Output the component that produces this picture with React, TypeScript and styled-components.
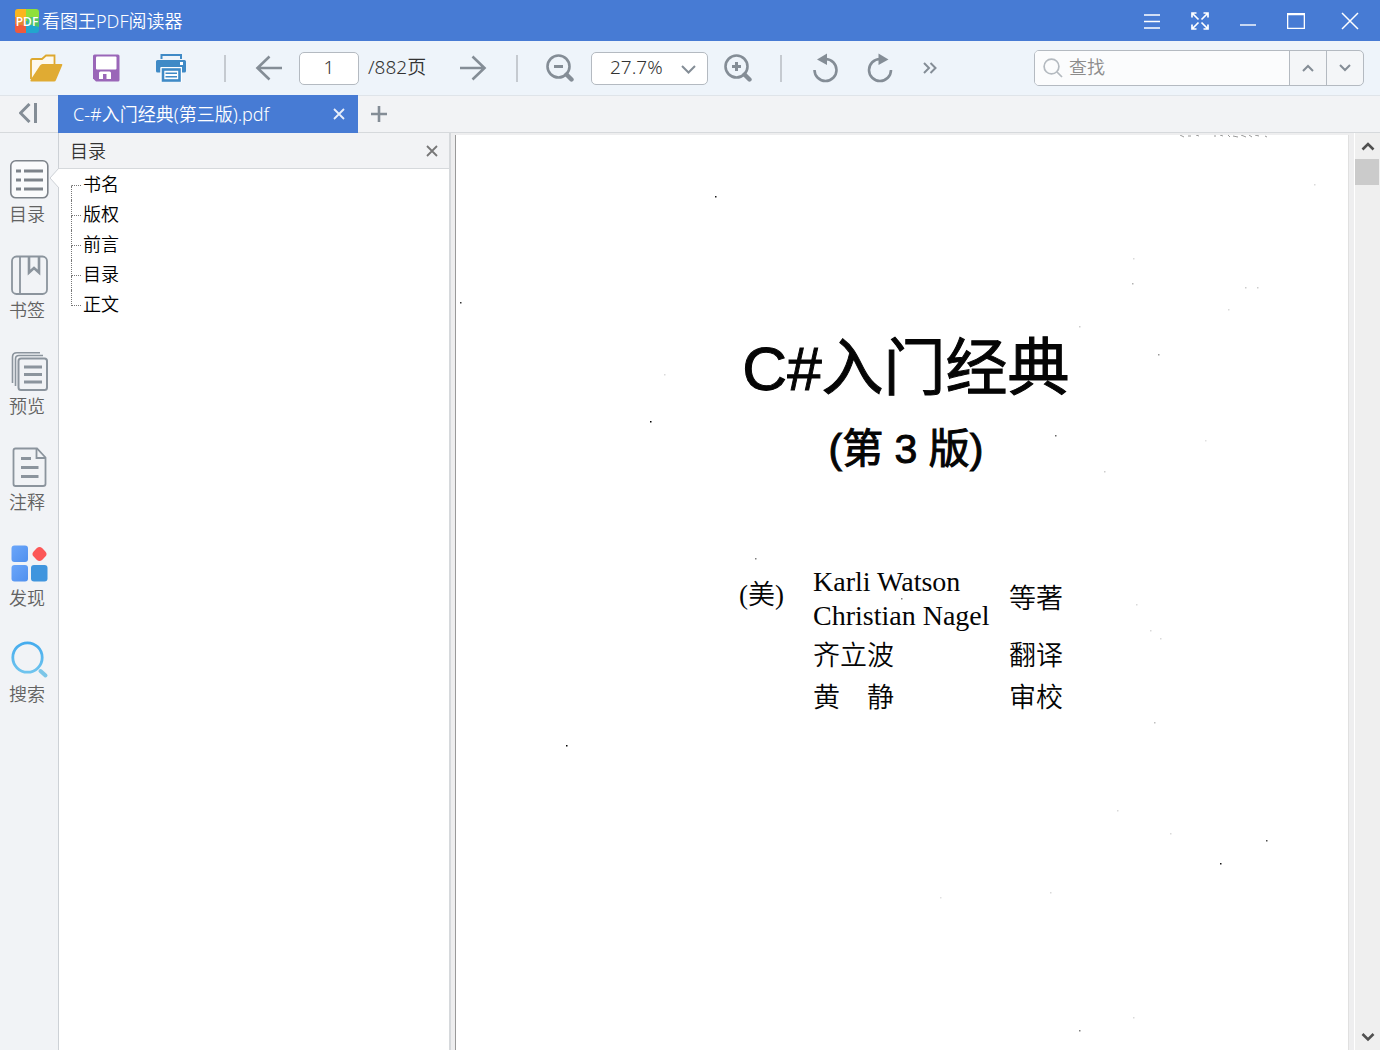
import React, { useState } from "react";
import styled, { createGlobalStyle } from "styled-components";

const color = {
  brand: "#477bd4",
  toolbar: "#eef4fa",
  chrome: "#f2f3f5",
  rail: "#f1f3f6",
  line: "#d6d9dc",
  field: "#b4bac1",
  icon: "#848d96",
  label: "#626262",
};

const GlobalStyle = createGlobalStyle`
  *, *::before, *::after { box-sizing: border-box; }
  body { margin: 0; }
  button, input, select { font: inherit; color: inherit; }
  button { padding: 0; border: 0; background: none; cursor: pointer; }
  svg { display: block; flex: none; }
`;

const Shell = styled.div`
  display: flex;
  flex-direction: column;
  height: 100vh;
  overflow: hidden;
  background: ${color.chrome};
  color: #333;
  font: 350 18px/24px "Noto Sans", "Noto Sans CJK SC", sans-serif;
`;

/* ---------- title bar ---------- */

const TitleBar = styled.header`
  display: flex;
  align-items: center;
  flex: none;
  height: 41px;
  padding-left: 15px;
  gap: 3px;
  background: ${color.brand};
  color: #fff;
`;

const AppName = styled.h1`
  margin: 0;
  flex: 1;
  font-size: 18px;
  font-weight: 350;
  line-height: 24px;
`;

const WindowButton = styled.button<{ $wide?: boolean }>`
  display: grid;
  place-items: center;
  width: ${(p) => (p.$wide ? 60 : 48)}px;
  height: 40px;
`;

const WindowButtons = styled.div`
  display: flex;
`;

/* ---------- toolbar ---------- */

const Toolbar = styled.div`
  display: flex;
  align-items: center;
  flex: none;
  height: 54px;
  padding: 0 16px 0 14px;
  background: ${color.toolbar};
`;

const ToolButton = styled.button<{ $width: number }>`
  display: grid;
  place-items: center;
  flex: none;
  width: ${(p) => p.$width}px;
  height: 40px;
  color: ${color.icon};
`;

const Separator = styled.span`
  flex: none;
  width: 2px;
  height: 27px;
  margin: 0 16px;
  background: #c5cad0;
`;

const PageInput = styled.input`
  width: 60px;
  height: 33px;
  margin: 0 9px 0 3px;
  padding: 0 0 2px;
  border: 1px solid ${color.field};
  border-radius: 5px;
  background: #fff;
  font-size: 19px;
  text-align: center;
`;

const PageTotal = styled.label`
  flex: none;
  width: 60px;
  margin-right: 18px;
  padding-bottom: 2px;
  font-size: 19px;
  white-space: nowrap;
`;

const ZoomField = styled.div`
  position: relative;
  flex: none;
  margin: 0 4px 0 5px;
  color: ${color.icon};

  svg {
    position: absolute;
    right: 12px;
    top: 13px;
    pointer-events: none;
  }
`;

const ZoomSelect = styled.select`
  appearance: none;
  display: block;
  width: 117px;
  height: 33px;
  padding: 0 32px 2px 18px;
  border: 1px solid ${color.field};
  border-radius: 5px;
  background: #fff;
  color: #333;
  font-size: 19px;
`;

const SearchForm = styled.form`
  display: flex;
  width: 330px;
  height: 36px;
  margin-left: auto;
  border: 1px solid ${color.field};
  border-radius: 5px;
  background: #f4f6f8;
  overflow: hidden;
`;

const SearchLabel = styled.label`
  display: flex;
  align-items: center;
  flex: 1;
  min-width: 0;
  gap: 6px;
  padding-left: 8px;
  background: #fbfcfd;
`;

const SearchInput = styled.input`
  flex: 1;
  min-width: 0;
  height: 34px;
  padding: 0 0 2px;
  border: 0;
  background: none;

  &::placeholder {
    color: #8c8c8c;
    opacity: 1;
  }
`;

const SearchStep = styled.button`
  display: grid;
  place-items: center;
  width: 37px;
  border-left: 1px solid ${color.field};
  color: ${color.icon};
`;

/* ---------- tabs ---------- */

const TabStrip = styled.nav`
  display: flex;
  flex: none;
  height: 38px;
  background: ${color.chrome};
  border-top: 1px solid #dfe4e9;
  border-bottom: 1px solid ${color.line};
`;

const CollapseButton = styled.button`
  display: grid;
  place-items: center;
  width: 58px;
  height: 34px;
  color: ${color.icon};
`;

const Tab = styled.div`
  display: flex;
  align-items: center;
  width: 300px;
  height: 38px;
  margin-top: -1px;
  padding: 0 13px 0 15px;
  background: ${color.brand};
  color: #fff;
`;

const TabTitle = styled.span`
  flex: 1;
  white-space: nowrap;
`;

const NewTabButton = styled.button`
  display: grid;
  place-items: center;
  width: 42px;
  height: 36px;
  color: ${color.icon};
`;

/* ---------- body ---------- */

const Body = styled.div`
  display: flex;
  flex: 1;
  min-height: 0;
`;

const Rail = styled.nav`
  display: flex;
  flex-direction: column;
  flex: none;
  width: 59px;
  gap: 29px;
  padding-top: 26px;
  background: ${color.rail};
  border-right: 1px solid #cdd1d6;
`;

const RailButton = styled.button`
  position: relative;
  display: flex;
  flex-direction: column;
  align-items: flex-start;
  gap: 3px;
  padding-left: 9px;
  color: ${color.label};
  line-height: 24px;
`;

const Notch = styled.svg`
  position: absolute;
  top: 8px;
  right: -1px;
`;

const Outline = styled.aside`
  flex: none;
  width: 392px;
  background: #fff;
  border-right: 2px solid ${color.line};
`;

const OutlineHeader = styled.div`
  display: flex;
  align-items: center;
  justify-content: space-between;
  height: 36px;
  padding: 0 11px;
  background: ${color.chrome};
  border-bottom: 1px solid ${color.line};
`;

const OutlineTitle = styled.h2`
  margin: 0;
  font-size: 18px;
  font-weight: 350;
`;

const CloseButton = styled.button<{ $light?: boolean }>`
  display: grid;
  place-items: center;
  width: 12px;
  height: 24px;
  color: ${(p) => (p.$light ? "#e8effb" : "#777")};
`;

const Tree = styled.ul`
  margin: 0;
  padding: 1px 12px;
  list-style: none;
`;

const TreeRow = styled.li`
  display: flex;
  gap: 2px;
  height: 30px;
`;

const Branch = styled.span<{ $first: boolean; $last: boolean }>`
  display: grid;
  grid-template-rows: 16px 14px;
  width: 10px;

  &::before {
    content: "";
    border-bottom: 1px dotted #777;
    border-left: 1px dotted ${(p) => (p.$first ? "transparent" : "#777")};
  }

  &::after {
    content: "";
    border-left: 1px dotted ${(p) => (p.$last ? "transparent" : "#777")};
  }
`;

const TreeLink = styled.a`
  color: #000;
  line-height: 28px;
  text-decoration: none;
`;

const Viewer = styled.main`
  display: flex;
  flex: 1;
  min-width: 0;
  padding-left: 4px;
  background: #eeeeef;
`;

const Sheet = styled.article`
  position: relative;
  display: flex;
  flex-direction: column;
  align-items: center;
  flex: 1;
  min-width: 0;
  margin-top: 2px;
  padding: 192px 0 0 8px;
  border-left: 1px solid #999;
  border-right: 1px solid #e0e0e0;
  background: #fff;
  color: #050505;
  overflow: hidden;
`;

const Specks = styled.svg`
  position: absolute;
  top: 0;
  left: 0;
`;

const BookTitle = styled.h2`
  margin: 0;
  font: 400 62px/84px "Liberation Sans", "Noto Sans CJK SC", sans-serif;
  -webkit-text-stroke: 1px currentColor;
`;

const Edition = styled.p`
  margin: 0;
  font: 400 41px/76px "Liberation Sans", "Noto Sans CJK SC", sans-serif;
  -webkit-text-stroke: 1px currentColor;
`;

const Credits = styled.div`
  display: grid;
  grid-template-columns: 74px 196px 64px;
  grid-template-rows: 72px 42px 42px;
  align-items: center;
  margin-top: 76px;
  font: 350 27px/34px "Liberation Serif", "Noto Sans CJK SC", serif;
  white-space: nowrap;
`;

const Country = styled.div`
  padding-bottom: 8px;
`;

const Authors = styled.div`
  font-size: 28px;
`;

const Credit = styled.div<{ $column: number }>`
  grid-column: ${(p) => p.$column};
`;

const ScrollBar = styled.div`
  display: flex;
  flex-direction: column;
  flex: none;
  width: 26px;
  margin-left: 5px;
  border-left: 1px solid #fff;
  background: #efefef;
`;

const ScrollButton = styled.button`
  display: grid;
  place-items: center;
  height: 26px;
  color: #505050;
`;

const ScrollTrack = styled.div`
  flex: 1;
`;

const ScrollThumb = styled.div`
  width: 24px;
  height: 26px;
  background: #cbcbcb;
`;

/* ---------- icons ---------- */

type StrokeProps = { d: string; w: number; h: number; stroke?: number };

const Stroke = ({ d, w, h, stroke = 2 }: StrokeProps) => (
  <svg width={w} height={h} viewBox={`0 0 ${w} ${h}`} fill="none" stroke="currentColor" strokeWidth={stroke} aria-hidden>
    <path d={d} />
  </svg>
);

const Logo = () => (
  <svg width="24" height="24" viewBox="0 0 24 24" aria-hidden>
    <defs>
      <clipPath id="logo-shape">
        <rect width="24" height="24" rx="3" />
      </clipPath>
    </defs>
    <g clipPath="url(#logo-shape)">
      <rect width="12" height="12" fill="#fbb51d" />
      <rect x="11" width="13" height="12" fill="#8fe03a" />
      <rect y="12" width="12" height="12" fill="#ee5a3c" />
      <rect x="11" y="12" width="13" height="12" fill="#22a6cd" />
      <path d="M11 8h13v10l-11-3z" fill="#52c467" />
      <path d="M0 8l11 2v7L0 15z" fill="#e7852e" />
    </g>
    <text x="12" y="16.500" textAnchor="middle" fill="#fff" fontFamily="Open Sans, sans-serif" fontSize="12" fontWeight="600">
      PDF
    </text>
  </svg>
);

const FolderIcon = () => (
  <svg width="34" height="28" viewBox="0 0 34 28" aria-hidden>
    <path d="M2 25V6.500Q2 5 3.500 5H13L17 1.500H25.500V10" fill="#fdf9ee" stroke="#dda82f" strokeWidth="1.800" />
    <path d="M13.500 10H32.500Q33.800 10 33.200 11.300L27 26Q26.500 27.500 25 27.500H2.500Q1 27.500 1.500 26L11 11.500Q12 10 13.500 10Z" fill="#e0ab33" />
  </svg>
);

const SaveIcon = () => (
  <svg width="28" height="28" viewBox="0 0 28 28" aria-hidden>
    <path d="M2.500 .5H26Q27.500 .5 27.500 2V26Q27.500 27.500 26 27.500H4L1 24.500V2Q1 .5 2.500 .5Z" fill="#9a66b8" />
    <rect x="4" y="2.500" width="20.500" height="13" rx="1" fill="#fff" />
    <path d="M7 27V19Q7 17.500 8.500 17.500H17.500Q19 17.500 19 19V25H14.500V20H11V25H7Z" fill="#fff" />
  </svg>
);

const PrintIcon = () => (
  <svg width="30" height="28" viewBox="0 0 30 28" aria-hidden>
    <path d="M5.500 5V1H25V5" fill="none" stroke="#3f8ac6" strokeWidth="2" />
    <path d="M1.500 6H28.500Q30 6 30 7.500V17Q30 18.500 28.500 18.500H26V14H4.500V18.500H1.500Q0 18.500 0 17V7.500Q0 6 1.500 6Z" fill="#3f8ac6" />
    <rect x="24" y="8" width="3" height="3" fill="#fff" />
    <rect x="4.500" y="13" width="21.500" height="15" fill="#fff" />
    <rect x="7" y="15.500" width="16.500" height="11" fill="#fff" stroke="#3f8ac6" strokeWidth="2.600" />
    <path d="M9.500 19.300H21M9.500 22.700H21" stroke="#3f8ac6" strokeWidth="1.600" />
  </svg>
);

const ArrowIcon = ({ right }: { right?: boolean }) => (
  <Stroke w={28} h={26} stroke={2.6} d={right ? "M1 13H26M13.500 1.500L25.500 13L13.500 24.500" : "M27 13H2M14.500 1.500L2.500 13L14.500 24.500"} />
);

const ZoomIcon = ({ plus }: { plus?: boolean }) => (
  <svg width="28" height="28" viewBox="0 0 28 28" fill="none" stroke="currentColor" aria-hidden>
    <circle cx="12.500" cy="12.500" r="11" strokeWidth="2.600" />
    <path d="M20.500 20.500L25.500 25.500" strokeWidth="4.400" strokeLinecap="round" />
    <path d={plus ? "M8 12.500H17M12.500 8V17" : "M8 12.500H17"} strokeWidth="3" />
  </svg>
);

const RotateIcon = ({ clockwise }: { clockwise?: boolean }) => (
  <svg width="28" height="30" viewBox="0 0 28 30" fill="none" aria-hidden>
    <g transform={clockwise ? "translate(26.500 0) scale(-1 1)" : "translate(2 0)"}>
      <path d="M1.500 17A11 11 0 1 0 12.500 6H11" stroke="currentColor" strokeWidth="2.600" />
      <path d="M4 6.500L14 .5V12Z" fill="currentColor" />
    </g>
  </svg>
);

const OutlineIcon = () => (
  <svg width="40" height="40" viewBox="0 0 40 40" fill="none" stroke="#7d838a" aria-hidden>
    <rect x="1.800" y="1.800" width="37" height="37" rx="5" strokeWidth="1.600" fill="#fafbfc" />
    <path d="M7 12H12M7 21H12M7 30H12M15 12H34M15 21H34M15 30H34" strokeWidth="2.800" />
  </svg>
);

const BookmarkIcon = () => (
  <svg width="40" height="40" viewBox="0 0 40 40" fill="none" stroke="#8b949d" strokeWidth="1.800" aria-hidden>
    <rect x="3" y="1.500" width="35" height="37.500" rx="4.500" />
    <path d="M11 2V39" />
    <path d="M20 2V17.500L25 13L30 17.500V2" strokeWidth="2.600" />
  </svg>
);

const PreviewIcon = () => (
  <svg width="40" height="40" viewBox="0 0 40 40" fill="none" stroke="#8b949d" strokeWidth="1.600" aria-hidden>
    <path d="M3.500 32V6Q3.500 1.800 8 1.800H31M6.500 35V8Q6.500 4.500 10 4.500H34" />
    <rect x="9.500" y="7.500" width="28.500" height="31.500" rx="2.500" strokeWidth="2" />
    <path d="M15 16H33M15 23.500H33M15 31H33" strokeWidth="2.800" />
  </svg>
);

const NoteIcon = () => (
  <svg width="40" height="40" viewBox="0 0 40 40" fill="none" stroke="#8b949d" strokeWidth="1.800" aria-hidden>
    <path d="M28 1.500H6.500Q4.500 1.500 4.500 3.500V37Q4.500 39 6.500 39H34Q36.500 39 36.500 37V10.500Z" />
    <path d="M27.500 2V11H36.500" />
    <path d="M12 11.500H22M12 20.500H29.500M12 29.500H29.500" strokeWidth="2.800" />
  </svg>
);

const DiscoverIcon = () => (
  <svg width="40" height="40" viewBox="0 0 40 40" aria-hidden>
    <defs>
      <linearGradient id="discover-tile" x1="0" y1="0" x2="1" y2="1">
        <stop offset="0" stopColor="#6ba6fa" />
        <stop offset="1" stopColor="#5090ee" />
      </linearGradient>
    </defs>
    <rect x="2.500" y="2.500" width="16.500" height="16.500" rx="3" fill="url(#discover-tile)" />
    <rect x="2.500" y="22" width="16.500" height="16.500" rx="3" fill="url(#discover-tile)" />
    <rect x="22" y="22" width="16.500" height="16.500" rx="3" fill="#3f95de" />
    <rect x="24.500" y="5" width="12" height="12" rx="4" transform="rotate(45 30.500 11)" fill="#fc5757" />
  </svg>
);

const WebSearchIcon = () => (
  <svg width="40" height="40" viewBox="0 0 40 40" fill="none" aria-hidden>
    <defs>
      <linearGradient id="lens" x1="0" y1="0" x2="0" y2="1">
        <stop offset="0" stopColor="#45acee" />
        <stop offset="1" stopColor="#6fc4ee" />
      </linearGradient>
    </defs>
    <circle cx="18.500" cy="18.500" r="14.700" stroke="url(#lens)" strokeWidth="2.800" />
    <path d="M31.500 32L36.500 36.500" stroke="#7cc6e8" strokeWidth="4" strokeLinecap="round" />
  </svg>
);

const SearchIcon = () => (
  <svg width="20" height="20" viewBox="0 0 20 20" fill="none" stroke="#b4bac0" strokeWidth="1.700" aria-hidden>
    <circle cx="8.500" cy="8.500" r="7.400" />
    <path d="M14 14L19 19" />
  </svg>
);

const CrossIcon = () => <Stroke w={12} h={12} stroke={1.8} d="M1 1L11 11M11 1L1 11" />;

/* ---------- data ---------- */

const railItems = [
  { label: "目录", icon: <OutlineIcon /> },
  { label: "书签", icon: <BookmarkIcon /> },
  { label: "预览", icon: <PreviewIcon /> },
  { label: "注释", icon: <NoteIcon /> },
  { label: "发现", icon: <DiscoverIcon /> },
  { label: "搜索", icon: <WebSearchIcon /> },
];

const chapters = ["书名", "版权", "前言", "目录", "正文"];

/* scanner dust on the page: x, y, opacity */
const dust: [number, number, number][] = [
  [259, 61, 0.9], [4, 167, 0.8], [194, 286, 1], [110, 610, 1], [764, 728, 0.9],
  [810, 705, 0.7], [599, 300, 0.6], [299, 423, 0.5], [702, 219, 0.4], [676, 148, 0.3],
  [677, 123, 0.15], [789, 152, 0.2], [801, 152, 0.2], [772, 174, 0.15], [623, 191, 0.2],
  [208, 239, 0.15], [858, 49, 0.15], [648, 336, 0.2], [445, 463, 0.5], [680, 469, 0.15],
  [698, 587, 0.25], [661, 675, 0.15], [714, 698, 0.15], [594, 757, 0.15], [484, 762, 0.12],
  [623, 895, 0.5], [677, 882, 0.15], [749, 305, 0.12], [694, 495, 0.15], [704, 503, 0.15],
];

const App = () => {
  const [page, setPage] = useState("1");
  const [query, setQuery] = useState("");

  return (
    <Shell>
      <GlobalStyle />
      <TitleBar>
        <Logo />
        <AppName>看图王PDF阅读器</AppName>
        <WindowButtons>
          <WindowButton aria-label="菜单">
            <Stroke w={16} h={16} stroke={1.6} d="M0 2H16M0 8.500H16M0 15H16" />
          </WindowButton>
          <WindowButton aria-label="全屏">
            <svg width="18" height="18" viewBox="0 0 18 18" fill="none" stroke="currentColor" strokeWidth="1.700" aria-hidden>
              <path d="M1 5.500V1H5.500M12.500 1H17V5.500M17 12.500V17H12.500M5.500 17H1V12.500M1 1L7.500 7.500M17 1L10.500 7.500M1 17L7.500 10.500M17 17L10.500 10.500" />
            </svg>
          </WindowButton>
          <WindowButton aria-label="最小化">
            <Stroke w={16} h={10} stroke={1.4} d="M0 9H16" />
          </WindowButton>
          <WindowButton aria-label="最大化">
            <svg width="18" height="16" viewBox="0 0 18 16" fill="none" stroke="currentColor" aria-hidden>
              <path d="M.5 .5H17.500V15.500H.5ZM0 1.500H18" strokeWidth="1.600" />
            </svg>
          </WindowButton>
          <WindowButton $wide aria-label="关闭">
            <Stroke w={18} h={18} stroke={1.5} d="M1 1L17 17M17 1L1 17" />
          </WindowButton>
        </WindowButtons>
      </TitleBar>

      <Toolbar>
        <ToolButton $width={64} aria-label="打开"><FolderIcon /></ToolButton>
        <ToolButton $width={56} aria-label="保存"><SaveIcon /></ToolButton>
        <ToolButton $width={74} aria-label="打印"><PrintIcon /></ToolButton>
        <Separator />
        <ToolButton $width={54} aria-label="上一页"><ArrowIcon /></ToolButton>
        <PageInput id="page" value={page} onChange={(e) => setPage(e.target.value)} />
        <PageTotal htmlFor="page">/882页</PageTotal>
        <ToolButton $width={54} aria-label="下一页"><ArrowIcon right /></ToolButton>
        <Separator />
        <ToolButton $width={52} aria-label="缩小"><ZoomIcon /></ToolButton>
        <ZoomField>
          <ZoomSelect aria-label="缩放比例" defaultValue="27.7%">
            <option>27.7%</option>
          </ZoomSelect>
          <Stroke w={15} h={9} d="M1 1L7.500 7.500L14 1" />
        </ZoomField>
        <ToolButton $width={52} aria-label="放大"><ZoomIcon plus /></ToolButton>
        <Separator />
        <ToolButton $width={54} aria-label="向左旋转"><RotateIcon /></ToolButton>
        <ToolButton $width={56} aria-label="向右旋转"><RotateIcon clockwise /></ToolButton>
        <ToolButton $width={44} aria-label="更多">
          <Stroke w={14} h={12} d="M1 1L6 6L1 11M7.500 1L12.500 6L7.500 11" />
        </ToolButton>
        <SearchForm onSubmit={(e) => e.preventDefault()}>
          <SearchLabel>
            <SearchIcon />
            <SearchInput aria-label="查找" placeholder="查找" value={query} onChange={(e) => setQuery(e.target.value)} />
          </SearchLabel>
          <SearchStep type="button" aria-label="查找上一个">
            <Stroke w={12} h={8} d="M1 7L6 2L11 7" />
          </SearchStep>
          <SearchStep type="button" aria-label="查找下一个">
            <Stroke w={12} h={8} d="M1 1L6 6L11 1" />
          </SearchStep>
        </SearchForm>
      </Toolbar>

      <TabStrip>
        <CollapseButton aria-label="收起侧栏">
          <svg width="20" height="20" viewBox="0 0 20 20" fill="none" stroke="currentColor" strokeWidth="3" aria-hidden>
            <path d="M10.500 1L1.500 10L10.500 19M16.500 0V20" />
          </svg>
        </CollapseButton>
        <Tab>
          <TabTitle>C-#入门经典(第三版).pdf</TabTitle>
          <CloseButton $light aria-label="关闭标签">
            <CrossIcon />
          </CloseButton>
        </Tab>
        <NewTabButton aria-label="新建标签">
          <Stroke w={16} h={16} stroke={2.6} d="M0 8H16M8 0V16" />
        </NewTabButton>
      </TabStrip>

      <Body>
        <Rail>
          {railItems.map((item, i) => (
            <RailButton key={item.label}>
              {item.icon}
              {item.label}
              {i === 0 && (
                <Notch width="10" height="22" viewBox="0 0 10 22" aria-hidden>
                  <path d="M10 1L1 11L10 21Z" fill="#fff" />
                  <path d="M10 1L1 11L10 21" fill="none" stroke="#cdd1d6" />
                </Notch>
              )}
            </RailButton>
          ))}
        </Rail>

        <Outline>
          <OutlineHeader>
            <OutlineTitle>目录</OutlineTitle>
            <CloseButton aria-label="关闭目录">
              <CrossIcon />
            </CloseButton>
          </OutlineHeader>
          <Tree>
            {chapters.map((name, i) => (
              <TreeRow key={name}>
                <Branch $first={i === 0} $last={i === chapters.length - 1} />
                <TreeLink href="#sheet">{name}</TreeLink>
              </TreeRow>
            ))}
          </Tree>
        </Outline>

        <Viewer>
          <Sheet id="sheet">
            <Specks width="892" height="915" viewBox="0 0 892 915" aria-hidden>
              {dust.map(([x, y, o]) => (
                <rect key={`${x}-${y}`} x={x} y={y} width="1.500" height="1.500" opacity={o} />
              ))}
              <path
                d="M724 0l4 2M732 1h3M740 0l3 1M758 1h2M764 0l3 1M772 0l2 2M777 1l5 1M785 0l5 2M793 0l3 2M799 0l4 1M809 1l2 1"
                stroke="#999"
              />
            </Specks>
            <BookTitle>C#入门经典</BookTitle>
            <Edition>(第 3 版)</Edition>
            <Credits>
              <Country>(美)</Country>
              <Authors>
                Karli Watson
                <br />
                Christian Nagel
              </Authors>
              <Credit $column={3}>等著</Credit>
              <Credit $column={2}>齐立波</Credit>
              <Credit $column={3}>翻译</Credit>
              <Credit $column={2}>黄　静</Credit>
              <Credit $column={3}>审校</Credit>
            </Credits>
          </Sheet>
          <ScrollBar>
            <ScrollButton aria-label="向上滚动">
              <Stroke w={14} h={10} stroke={2.6} d="M1.500 8.500L7 3L12.500 8.500" />
            </ScrollButton>
            <ScrollTrack>
              <ScrollThumb />
            </ScrollTrack>
            <ScrollButton aria-label="向下滚动">
              <Stroke w={14} h={10} stroke={2.6} d="M1.500 2L7 7.500L12.500 2" />
            </ScrollButton>
          </ScrollBar>
        </Viewer>
      </Body>
    </Shell>
  );
};

export default App;
